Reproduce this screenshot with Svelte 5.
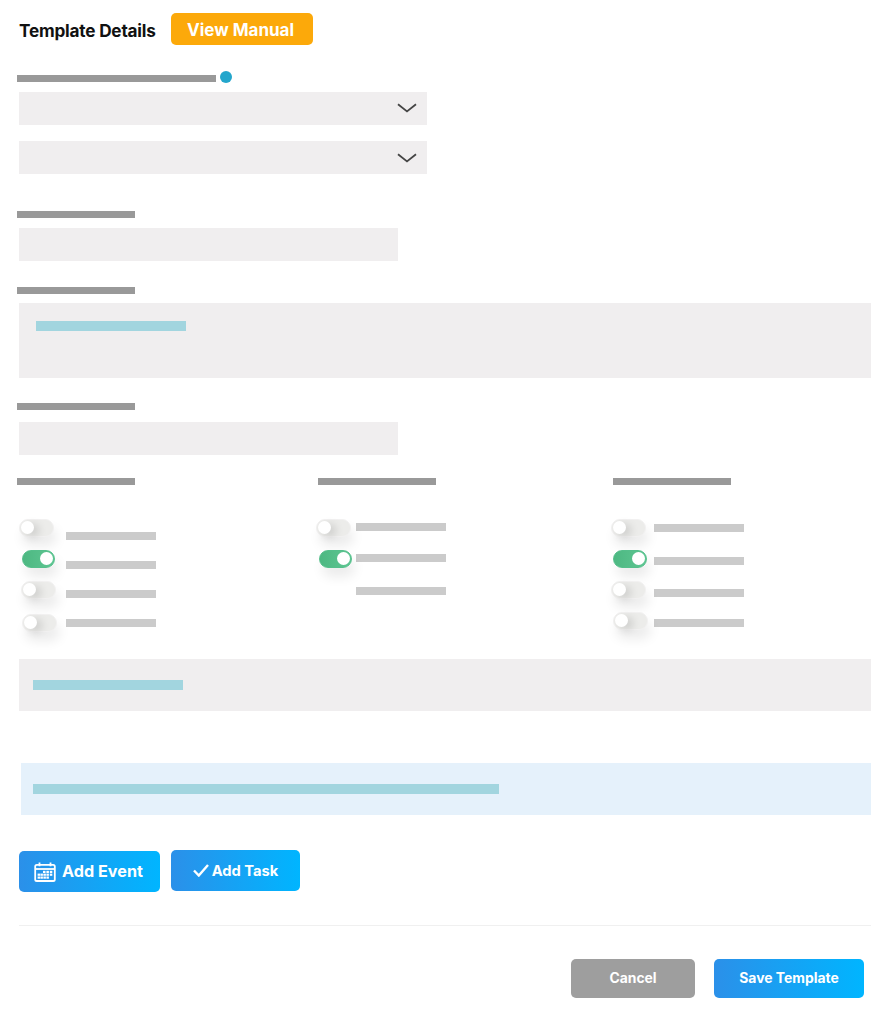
<script>
  const columns = [
    { cls: 'c1', rows: [
      { on: false, mx: 0, w: 35, my: 0, h: 18, by: 13 },
      { on: true, mx: 3, w: 33, my: 0, h: 18, by: 11 },
      { on: false, mx: 2, w: 35, my: 0, h: 18, by: 9 },
      { on: false, mx: 3, w: 35, my: 2, h: 18, by: 7 }
    ] },
    { cls: 'c2', rows: [
      { on: false, mx: 0, w: 35, my: 0, h: 18, by: 4 },
      { on: true, mx: 3, w: 33, my: 0, h: 18, by: 4 },
      { none: true, by: 6 }
    ] },
    { cls: 'c3', rows: [
      { on: false, mx: 0, w: 35, my: 0, h: 18, by: 5 },
      { on: true, mx: 2, w: 34, my: 0, h: 18, by: 7 },
      { on: false, mx: 0, w: 35, my: 0, h: 18, by: 8 },
      { on: false, mx: 2, w: 35, my: 0, h: 18, by: 7 }
    ] }
  ];
</script>

<main class="page">
  <header class="head">
    <h1>Template Details</h1>
    <button class="manual">View Manual</button>
  </header>

  <div class="label-row">
    <span class="label long"></span>
    <span class="dot"></span>
  </div>
  <div class="field select">
    <svg width="20" height="10" viewBox="0 0 20 10"><path d="M1 1.2 L10 8.4 L19 1.2" fill="none" stroke="#444" stroke-width="1.8"/></svg>
  </div>
  <div class="field select second">
    <svg width="20" height="10" viewBox="0 0 20 10"><path d="M1 1.2 L10 8.4 L19 1.2" fill="none" stroke="#444" stroke-width="1.8"/></svg>
  </div>

  <span class="label gap36"></span>
  <div class="field short s1"></div>

  <span class="label gap25"></span>
  <div class="field area"><span class="link"></span></div>

  <span class="label gap24"></span>
  <div class="field short s2"></div>

  <section class="columns">
    {#each columns as col}
      <div class="col {col.cls}">
        <span class="label head-label"></span>
        <div class="rows">
          {#each col.rows as r}
            <div class="row">
              <div class="tog-cell">
                {#if !r.none}
                  <span class="toggle" class:on={r.on} style="margin-left:{r.mx}px;margin-top:{r.my}px;width:{r.w}px;height:{r.h}px"><i></i></span>
                {/if}
              </div>
              <span class="bar" style="margin-top:{r.by}px"></span>
            </div>
          {/each}
        </div>
      </div>
    {/each}
  </section>

  <div class="band grey"><span class="link"></span></div>
  <div class="band blue"><span class="link wide"></span></div>

  <div class="actions">
    <button class="grad event">
      <svg width="22" height="20" viewBox="0 0 22 20" fill="none">
        <rect x="1.2" y="2.8" width="19.6" height="16.2" rx="1.6" stroke="#fff" stroke-width="1.8"/>
        <path d="M1 7 H21" stroke="#fff" stroke-width="1.8"/>
        <path d="M5.5 0.4 V4.2 M16.5 0.4 V4.2" stroke="#fff" stroke-width="1.8"/>
        <g fill="#fff">
          <rect x="9" y="8.8" width="2.5" height="2.2"/><rect x="12.4" y="8.8" width="2.5" height="2.2"/><rect x="15.8" y="8.8" width="2.5" height="2.2"/>
          <rect x="3.6" y="11.6" width="2.5" height="2.2"/><rect x="6.4" y="11.6" width="2.5" height="2.2"/><rect x="9.4" y="11.6" width="2.5" height="2.2"/><rect x="12.4" y="11.6" width="2.5" height="2.2"/><rect x="15.8" y="11.6" width="2.5" height="2.2"/>
          <rect x="3.6" y="14.5" width="2.5" height="2.2"/><rect x="6.4" y="14.5" width="2.5" height="2.2"/><rect x="9.4" y="14.5" width="2.5" height="2.2"/><rect x="12.4" y="14.5" width="2.5" height="2.2"/>
        </g>
      </svg>
      <span class="txt">Add Event</span>
    </button>
    <button class="grad task">
      <svg width="16" height="13" viewBox="0 0 16 13" fill="none"><path d="M1 6.5 L5.8 11.5 L15 1" stroke="#fff" stroke-width="2.4"/></svg>
      <span class="txt">Add Task</span>
    </button>
  </div>

  <hr />

  <footer class="foot">
    <button class="cancel">Cancel</button>
    <button class="grad save">Save Template</button>
  </footer>
</main>

<style>
  :global(body) { margin: 0; background: #fff; }
  .page {
    box-sizing: border-box;
    width: 891px;
    height: 1024px;
    padding: 13px 20px 0 19px;
    font-family: Inter, "Liberation Sans", sans-serif;
    display: flex;
    flex-direction: column;
    align-items: flex-start;
    overflow: hidden;
  }
  .head { display: flex; align-items: center; height: 32px; }
  h1 { margin: 2px 0 0; font-size: 17.2px; font-weight: 650; color: #111; width: 152px; white-space: nowrap; letter-spacing: -0.2px; }
  button { border: 0; cursor: pointer; font-family: inherit; color: #fff; font-weight: 650; padding: 0; }
  .manual {
    width: 142px; height: 32px; background: #fca90a; border-radius: 5px;
    font-size: 17px; text-align: left; padding: 1px 0 0 16px; box-sizing: border-box;
  }
  .label { display: block; height: 7px; width: 118px; background: #999; margin-left: -2px; flex: none; }
  .label.long { width: 199px; margin-top: 2px; }
  .label-row { display: flex; align-items: center; margin-top: 26px; height: 12px; }
  .dot { width: 12px; height: 12px; border-radius: 50%; background: #23a6cc; margin-left: 4px; }
  .field { background: #f0eeef; flex: none; }
  .select {
    width: 408px; height: 33px; margin-top: 9px; padding-bottom: 1px;
    display: flex; align-items: center; justify-content: flex-end; padding-right: 10px; box-sizing: border-box;
  }
  .select.second { margin-top: 16px; padding-bottom: 0; }
  .short { width: 379px; height: 33px; }
  .s1 { margin-top: 10px; }
  .s2 { margin-top: 12px; }
  .gap36 { margin-top: 37px; }
  .gap25 { margin-top: 26px; }
  .gap24 { margin-top: 25px; }
  .area { width: 852px; height: 75px; margin-top: 9px; padding: 18px 0 0 17px; box-sizing: border-box; }
  .link { display: block; width: 150px; height: 10px; background: #a2d5df; }
  .columns { display: grid; grid-template-columns: 297px 295px 1fr; width: 852px; margin-top: 23px; height: 181px; }
  .col { display: flex; flex-direction: column; }
  .c2 .head-label, .c3 .head-label { margin-left: 2px; }
  .rows { margin-top: 34px; }
  .row { display: flex; height: 31px; }
  .c1 .tog-cell { width: 47px; }
  .c2 .tog-cell { width: 40px; }
  .c3 .tog-cell { width: 43px; }
  .tog-cell { flex: none; }
  .bar { display: block; width: 90px; height: 8px; background: #cbcbcb; }
  .toggle {
    display: block; box-sizing: border-box; position: relative;
    border-radius: 9px; background: #ececea; border: 1.5px solid #f2f1f1;
    box-shadow: 3px 9px 12px rgba(0,0,0,.08);
  }
  .toggle i {
    position: absolute; left: 1px; top: 1px; width: 13px; height: 13px; border-radius: 50%;
    background: #fff; box-shadow: 5px 3px 8px rgba(0,0,0,.14);
  }
  .toggle.on { background: linear-gradient(90deg, #4db882, #5ec692); border-color: #55bf8b; }
  .toggle.on i { left: auto; right: 1px; box-shadow: none; }
  .band { height: 52px; display: flex; align-items: center; flex: none; box-sizing: border-box; }
  .grey { width: 852px; background: #f0eeef; padding-left: 14px; }
  .blue { width: 850px; margin-left: 2px; margin-top: 52px; background: #e5f1fb; padding-left: 12px; }
  .link.wide { width: 466px; }
  .actions { display: flex; gap: 11px; margin-top: 36px; align-items: flex-start; }
  .grad { background: linear-gradient(90deg, #2b90e9, #00b5ff); display: flex; align-items: center; justify-content: center; border-radius: 5px; }
  .event .txt { margin-top: -2px; }
  .task .txt { margin-top: 0; }
  .event { width: 141px; height: 41px; font-size: 16.2px; gap: 6px; padding-right: 2px; box-sizing: border-box; }
  .task { width: 129px; height: 41px; font-size: 14.7px; gap: 3px; margin-top: -1px; }
  hr { width: 852px; height: 1px; border: 0; background: #f0f0f0; margin: 33px 0 0; flex: none; }
  .foot { display: flex; gap: 19px; margin: 33px 0 0 552px; }
  .foot button { height: 39px; font-size: 13.9px; border-radius: 5px; padding-bottom: 2px; box-sizing: border-box; }
  .cancel { width: 124px; background: #9e9e9e; }
  .save { width: 150px; }
</style>
